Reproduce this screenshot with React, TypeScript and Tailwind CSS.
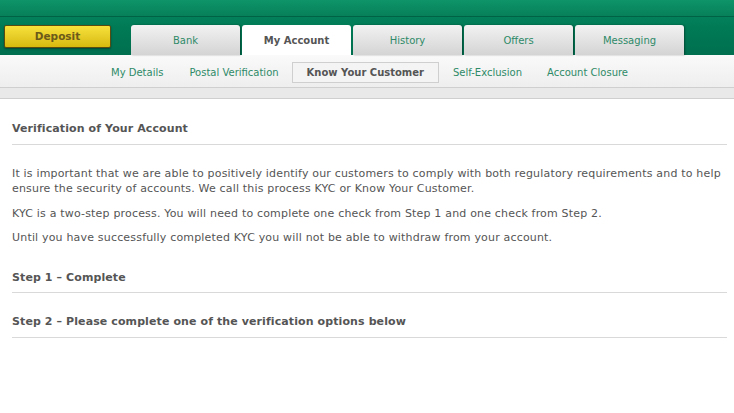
const tabs = ["Bank", "My Account", "History", "Offers", "Messaging"];
const subLinks = ["My Details", "Postal Verification", "Know Your Customer", "Self-Exclusion", "Account Closure"];

export default function App() {
  return (
    <div className="h-[413px] w-[734px] overflow-hidden bg-white text-[11px] text-[#555]" style={{ fontFamily: '"DejaVu Sans", Verdana, sans-serif' }}>
      {/* top header */}
      <div className="h-[55px] bg-gradient-to-b from-[#0a8c62] via-[#007a55] to-[#006f4f]">
        <div className="h-[17px] border-b border-[#006245] bg-gradient-to-b from-[#0e9468] to-[#078059]" />
        <div className="flex items-end pl-1 pt-[8px]">
          <button className="mb-[7px] h-[23px] w-[107px] rounded-[2px] border border-[#5a4b10] bg-gradient-to-b from-[#f7e23a] to-[#d8b90c] text-[10.5px] font-bold text-[#6b5a1a] shadow-[0_1px_2px_rgba(0,0,0,0.4)]">
            Deposit
          </button>
          <div className="ml-5 flex gap-[2px] text-[10px]">
            {tabs.map((tab) =>
              tab === "My Account" ? (
                <div key={tab} className="flex h-[30px] w-[109px] items-center justify-center rounded-t-[3px] bg-white pt-[1px] font-bold text-[#555]">
                  {tab}
                </div>
              ) : (
                <div key={tab} className="flex h-[30px] w-[109px] items-center justify-center rounded-t-[3px] bg-gradient-to-b from-[#f2f2f2] to-[#d4d4d4] pt-[1px] text-[#2e8a68] shadow-[1px_0_2px_rgba(0,0,0,0.35)]">
                  {tab}
                </div>
              )
            )}
          </div>
        </div>
      </div>

      {/* sub navigation */}
      <div className="flex h-[33px] items-center border-b border-[#cfcfcf] bg-gradient-to-b from-[#fafafa] to-[#eeeeee] pl-[111px] pt-[2px] text-[10px]">
        {subLinks.map((link, i) =>
          link === "Know Your Customer" ? (
            <div key={link} className="ml-[13px] flex h-[21px] items-center border border-[#cfcfcf] bg-[#f4f4f4] px-[14px] font-bold text-[#555]">
              {link}
            </div>
          ) : (
            <div key={link} className={`text-[#2e8a68] ${i === 0 ? "" : i === 3 ? "ml-[14px]" : i === 4 ? "ml-[25px]" : "ml-[26px]"}`}>
              {link}
            </div>
          )
        )}
      </div>
      <div className="h-[11px] border-b border-[#cfcfcf] bg-[#e9e9e9]" />

      {/* content */}
      <div className="pl-3 pr-[7px] pt-[22px]">
        <div className="border-b border-[#d9d9d9] pb-[6px] font-bold tracking-[0.1px]">Verification of Your Account</div>
        <div className="pt-[21px] leading-[15px] tracking-[0.18px]">
          <p>
            It is important that we are able to positively identify our customers to comply with both regulatory requirements and to help
            ensure the security of accounts. We call this process KYC or Know Your Customer.
          </p>
          <p className="mt-[10px]">KYC is a two-step process. You will need to complete one check from Step 1 and one check from Step 2.</p>
          <p className="mt-[9px]">Until you have successfully completed KYC you will not be able to withdraw from your account.</p>
        </div>
        <div className="mt-[25px] border-b border-[#d9d9d9] pb-[6px] font-bold tracking-[0.1px]">Step 1 – Complete</div>
        <div className="mt-[21px] border-b border-[#d9d9d9] pb-[6px] font-bold tracking-[0.1px]">Step 2 – Please complete one of the verification options below</div>
      </div>
    </div>
  );
}
